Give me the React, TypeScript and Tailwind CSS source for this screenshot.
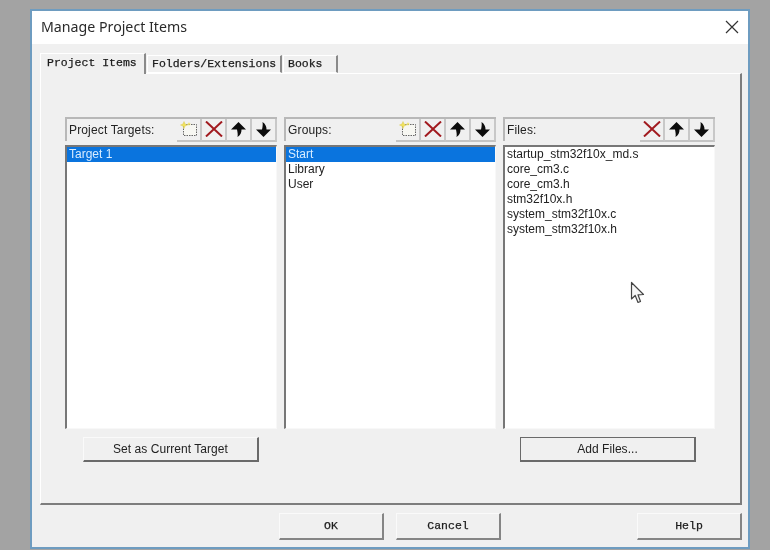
const sans = "font-['Liberation_Sans',Arial,sans-serif]";
const mono = "font-['Liberation_Mono','Courier_New',monospace]";

function NewIcon() {
  return (
    <svg width="18" height="16" viewBox="0 0 18 16" fill="none">
      <rect x="3.5" y="3.5" width="13" height="11" stroke="#666" strokeWidth="1" strokeDasharray="1.5 1" fill="#f7f7f2" />
      <path d="M4 0.5 L5 3 L7.5 4 L5 5 L4 7.5 L3 5 L0.5 4 L3 3 Z" fill="#f2e35a" stroke="#d6c53a" strokeWidth="0.4" />
      <path d="M9 1 L9.6 2.6 L11 3 L9.6 3.5 L9 5 L8.4 3.5 L7 3 L8.4 2.6 Z" fill="#f2e35a" />
    </svg>
  );
}

function DeleteIcon() {
  return (
    <svg width="18" height="16" viewBox="0 0 18 16" fill="none">
      <path d="M1 0.5 L17 15.5 M17 0.5 L1 15.5" stroke="#a11a1f" strokeWidth="2" />
    </svg>
  );
}

function UpIcon() {
  return (
    <svg width="15" height="15" viewBox="0 0 15 15">
      <path d="M7.5 0 L15 7.5 H10.5 C10.5 10.5 9.5 13 6.5 15 C7 12.5 6.5 10 6 7.5 H0 Z" fill="#0c0c0c" />
    </svg>
  );
}

function DownIcon() {
  return (
    <svg width="15" height="15" viewBox="0 0 15 15">
      <path d="M7.5 15 L15 7.5 H10.5 C10.5 4.5 9.5 2 6.5 0 C7 2.5 6.5 5 6 7.5 H0 Z" fill="#0c0c0c" />
    </svg>
  );
}

function ToolButton({ children }: { children: React.ReactNode }) {
  return (
    <div className="w-[25px] h-[23px] flex items-center justify-center border-r-2 border-b-2 border-r-[#c8c8c8] border-b-[#c4c4c4]">
      {children}
    </div>
  );
}

function Column({
  label,
  canAdd,
  items,
  selected,
}: {
  label: string;
  canAdd: boolean;
  items: string[];
  selected: boolean;
}) {
  return (
    <div className="w-[212px] flex flex-col gap-[4px]">
      <div className="h-[24px] flex items-center border-t-2 border-l-2 border-t-[#b8b8b8] border-l-[#b8b8b8]">
        <span className={`${sans} text-[12px] text-[#222] pl-[2px] tracking-[0.15px]`}>{label}</span>
        <div className="ml-auto flex">
          {canAdd && (
            <ToolButton>
              <NewIcon />
            </ToolButton>
          )}
          <ToolButton>
            <DeleteIcon />
          </ToolButton>
          <ToolButton>
            <UpIcon />
          </ToolButton>
          <ToolButton>
            <DownIcon />
          </ToolButton>
        </div>
      </div>
      <div className="h-[284px] bg-white border-t-2 border-l-2 border-t-[#777777] border-l-[#777777] border-r border-b border-r-[#f8f8f8] border-b-[#f8f8f8]">
        <div className={`${sans} text-[12px] leading-[15px] text-[#222]`}>
          {items.map((item, i) => (
            <div key={item} className={`px-[2px] h-[15px] ${selected && i === 0 ? "bg-[#0a74de] text-[#d8ecff]" : ""}`}>
              {item}
            </div>
          ))}
        </div>
      </div>
    </div>
  );
}

function Tab({ label, active, width }: { label: string; active?: boolean; width: string }) {
  return (
    <div
      className={`${mono} ${width} text-[11.5px] text-[#1c1c1c] [-webkit-text-stroke:0.25px_#1c1c1c] border-t border-l border-t-white border-l-white border-r-2 border-r-[#8a8a8a] flex items-center ${
        active ? "h-[21px] bg-[#f0f0f0] pl-[6px] pb-[3px] -mb-px z-10" : "h-[18px] bg-[#f0f0f0] pl-[4px] border-b border-b-white"
      }`}
    >
      {label}
    </div>
  );
}

function ActionButton({ label, strong, width }: { label: string; strong?: boolean; width: string }) {
  return (
    <div
      className={`${width} h-[25px] flex items-center justify-center ${sans} text-[12px] text-[#222] tracking-[0.05px] border-r-2 border-b-2 border-r-[#6a6a6a] border-b-[#6a6a6a] ${
        strong ? "border-t border-l border-t-[#6a6a6a] border-l-[#6a6a6a]" : "border-t border-l border-t-[#fafafa] border-l-[#fafafa]"
      }`}
    >
      {label}
    </div>
  );
}

function FooterButton({ label, className }: { label: string; className?: string }) {
  return (
    <div
      className={`w-[105px] h-[27px] flex items-center justify-center ${mono} text-[11.5px] text-[#1c1c1c] [-webkit-text-stroke:0.25px_#1c1c1c] border-t border-l border-t-[#fafafa] border-l-[#fafafa] border-r-2 border-b-2 border-r-[#858585] border-b-[#858585] ${className ?? ""}`}
    >
      {label}
    </div>
  );
}

export default function App() {
  return (
    <div className="relative w-[770px] h-[550px] overflow-hidden bg-[#a3a3a3] pt-[9px] pl-[30px] blur-[0.5px]">
      <div className="w-[720px] h-[540px] flex flex-col border-2 border-[#6e9cc0] bg-[#f0f0f0]">
        <div className="h-[33px] shrink-0 bg-white flex items-center justify-between pl-[9px] pr-[9px] pb-[2px]">
          <span className="font-['Noto_Sans',sans-serif] text-[14.2px] text-[#2a2a2a]">Manage Project Items</span>
          <svg width="14" height="14" viewBox="0 0 14 14" fill="none">
            <path d="M1 1 L13 13 M13 1 L1 13" stroke="#333" strokeWidth="1.2" />
          </svg>
        </div>
        <div className="flex-1 flex flex-col pt-[8px] px-[8px]">
          <div className="flex items-end h-[21px] gap-[1px]">
            <Tab label="Project Items" active width="w-[106px]" />
            <Tab label="Folders/Extensions" width="w-[135px]" />
            <Tab label="Books" width="w-[55px]" />
          </div>
          <div className="w-[702px] h-[432px] shrink-0 border-t border-l border-t-white border-l-white border-r-2 border-b-2 border-r-[#7d7d7d] border-b-[#7d7d7d] pt-[43px] pl-[24px]">
            <div className="flex gap-[7px]">
              <Column label="Project Targets:" canAdd items={["Target 1"]} selected />
              <Column label="Groups:" canAdd items={["Start", "Library", "User"]} selected />
              <Column
                label="Files:"
                canAdd={false}
                selected={false}
                items={[
                  "startup_stm32f10x_md.s",
                  "core_cm3.c",
                  "core_cm3.h",
                  "stm32f10x.h",
                  "system_stm32f10x.c",
                  "system_stm32f10x.h",
                ]}
              />
            </div>
            <div className="flex mt-[8px]">
              <div className="w-[219px] pl-[18px]">
                <ActionButton label="Set as Current Target" width="w-[176px]" />
              </div>
              <div className="w-[219px]" />
              <div className="pl-[17px]">
                <ActionButton label="Add Files..." strong width="w-[176px]" />
              </div>
            </div>
          </div>
          <div className="flex mt-[8px] pl-[239px] w-[702px]">
            <FooterButton label="OK" />
            <FooterButton label="Cancel" className="ml-[12px]" />
            <FooterButton label="Help" className="ml-auto" />
          </div>
        </div>
      </div>
      <svg className="absolute left-[630px] top-[281px]" width="16" height="24" viewBox="0 0 16 24" fill="none">
        <path d="M1.5 1.5 V18 L5.2 14.5 L8 21.5 L10.5 20.5 L8 13.8 L13.5 13.5 Z" fill="#f6f6f6" stroke="#444" strokeWidth="1.2" strokeLinejoin="round" />
      </svg>
    </div>
  );
}
